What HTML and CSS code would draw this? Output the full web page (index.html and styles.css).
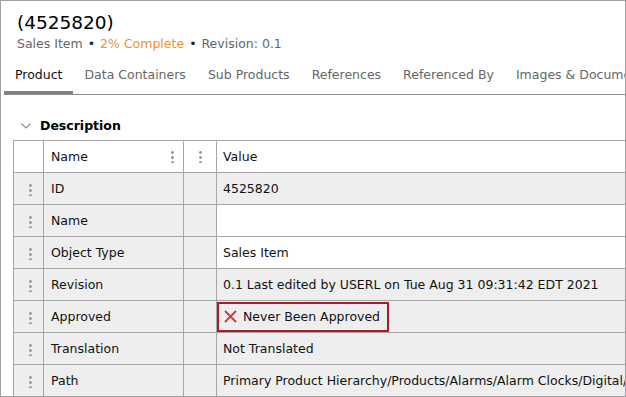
FILE: index.html
```html
<!DOCTYPE html>
<html lang="en">
<head>
  <meta charset="UTF-8">
  <link rel="stylesheet" href="styles.css">
</head>
<body>
  <div class="frame">
    <!-- item header -->
    <div class="item-head">
      <div class="item-title">(4525820)</div>
      <div class="item-meta">
        <span>Sales Item</span><span class="dot">•</span><span class="complete">2% Complete</span><span class="dot">•</span><span>Revision: 0.1</span>
      </div>
    </div>

    <!-- tabs -->
    <div class="tabs">
      <div class="tab active">Product</div>
      <div class="tab">Data Containers</div>
      <div class="tab">Sub Products</div>
      <div class="tab">References</div>
      <div class="tab">Referenced By</div>
      <div class="tab">Images &amp; Documents</div>
    </div>

    <!-- section -->
    <div class="section-head">
      <svg class="chevron" width="10" height="6" viewBox="0 0 10 6"><path d="M0.5 0.5 L5 5 L9.5 0.5" fill="none" stroke="#8a8a8a" stroke-width="1.1"/></svg>
      <span>Description</span>
    </div>

    <table class="grid">
      <colgroup>
        <col class="c-handle"><col class="c-name"><col class="c-gap"><col class="c-value">
      </colgroup>
      <tr class="head">
        <td></td>
        <td><div class="head-cell">Name<span class="dots"></span></div></td>
        <td><div class="head-cell right"><span class="dots"></span></div></td>
        <td>Value</td>
      </tr>
      <tr>
        <td><span class="dots"></span></td><td>ID</td><td></td><td>4525820</td>
      </tr>
      <tr>
        <td><span class="dots"></span></td><td>Name</td><td></td><td class="white"></td>
      </tr>
      <tr>
        <td><span class="dots"></span></td><td>Object Type</td><td></td><td class="white">Sales Item</td>
      </tr>
      <tr>
        <td><span class="dots"></span></td><td>Revision</td><td></td><td>0.1 Last edited by USERL on Tue Aug 31 09:31:42 EDT 2021</td>
      </tr>
      <tr>
        <td><span class="dots"></span></td><td>Approved</td><td></td>
        <td class="flagged">
          <span class="flag-box">
            <svg class="xmark" width="13" height="13" viewBox="0 0 13 13"><path d="M1 1 L12 12 M12 1 L1 12" stroke="#d8333f" stroke-width="1.8"/></svg>
            Never Been Approved
          </span>
        </td>
      </tr>
      <tr>
        <td><span class="dots"></span></td><td>Translation</td><td></td><td>Not Translated</td>
      </tr>
      <tr>
        <td><span class="dots"></span></td><td>Path</td><td></td><td>Primary Product Hierarchy/Products/Alarms/Alarm Clocks/Digital/Bedside</td>
      </tr>
    </table>
  </div>
</body>
</html>
```

FILE: styles.css
```css
body {
  margin: 0;
  font-family: Tahoma, "DejaVu Sans", sans-serif;
  font-size: 12.5px;
  color: #111;
}
.frame {
  width: 626px;
  height: 397px;
  box-sizing: border-box;
  border: 1px solid #a0a0a0;
  overflow: hidden;
  background: #fff;
}
.item-head {
  padding: 9px 0 0 16px;
}
.item-title {
  font-size: 18.5px;
  line-height: 25px;
  color: #000;
}
.item-meta {
  color: #666;
  line-height: 17px;
  white-space: nowrap;
}
.item-meta .dot {
  color: #222;
  margin: 0 5px;
}
.item-meta .complete {
  color: #f39325;
}
.tabs {
  display: flex;
  margin: 9px 0 0 3px;
  border-bottom: 1px solid #8c8c8c;
  white-space: nowrap;
}
.tab {
  padding: 5px 11px 8px;
  color: #666;
  line-height: 17px;
  border-bottom: 3px solid transparent;
  flex-shrink: 0;
}
.tab.active {
  color: #111;
  border-bottom-color: #808080;
}
.section-head {
  display: flex;
  align-items: center;
  padding: 22px 0 0 20px;
  height: 17px;
  font-weight: bold;
  color: #000;
}
.chevron {
  margin-right: 9px;
}
.grid {
  margin: 6px 0 0 12px;
  border-collapse: collapse;
  width: 640px;
  table-layout: fixed;
}
.c-handle { width: 30px; }
.c-name { width: 140px; }
.c-gap { width: 33px; }
.grid td {
  border: 1px solid #a6a6a6;
  height: 31px;
  padding: 0 0 0 7px;
  background: #eee;
  white-space: nowrap;
  overflow: hidden;
}
.grid td:nth-child(4) {
  padding-left: 6px;
}
.grid td:first-child {
  padding: 0 0 0 3px;
  text-align: center;
}
.grid td.white,
.grid tr.head td {
  background: #fff;
}
.head-cell {
  display: flex;
  align-items: center;
  justify-content: space-between;
  padding-right: 9px;
}
.head-cell.right {
  justify-content: flex-start;
  padding: 0 0 0 15px;
}
.grid tr.head td:nth-child(3) {
  padding: 0;
}
.dots {
  display: inline-block;
  width: 3px;
  height: 13px;
  background: radial-gradient(circle, #9b9b9b 1.3px, transparent 1.5px) 0 0 / 3px 5px repeat-y;
  vertical-align: middle;
}
.grid td.flagged {
  padding: 0;
}
.flag-box {
  display: flex;
  align-items: center;
  box-sizing: border-box;
  width: 172px;
  height: 30px;
  border: 2px solid #a51d2a;
  padding-left: 5px;
  gap: 6px;
}
```
